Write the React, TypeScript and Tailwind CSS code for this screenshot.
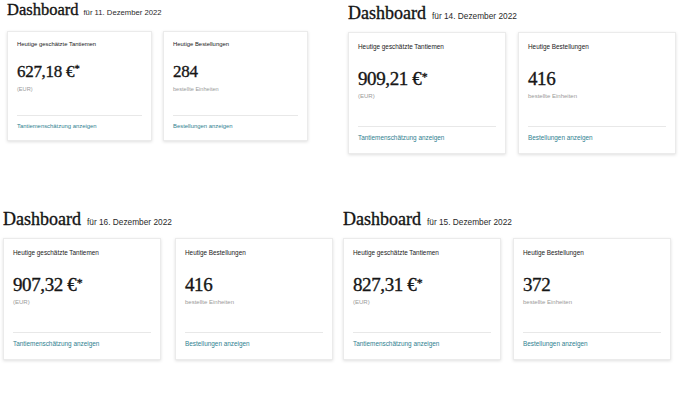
import React from "react";

type V = "sm" | "md";

const S = {
  sm: {
    title: "text-[16.5px] leading-[16.5px]",
    date: "text-[7.7px] ml-[5px]",
    titleRow: "mb-[12px]",
    card: "w-[145px] h-[110px] px-[9px] pt-[8px] pb-[10px]",
    heading: "text-[5.9px] leading-[8px]",
    value: "text-[17px] leading-[17px] mt-[15px] tracking-[-0.3px]",
    sub: "text-[5.6px] leading-[8px] mt-[5px]",
    link: "text-[5.9px] leading-[8px] pt-[6px]",
  },
  md: {
    title: "text-[18px] leading-[18px]",
    date: "text-[8.3px] ml-[6px]",
    titleRow: "mb-[10px]",
    card: "w-[158px] h-[122px] px-[9px] pt-[10px] pb-[11px]",
    heading: "text-[6.4px] leading-[8px]",
    value: "text-[19px] leading-[19px] mt-[18px] tracking-[-0.4px]",
    sub: "text-[6px] leading-[8px] mt-[4px]",
    link: "text-[6.4px] leading-[8px] pt-[7px]",
  },
};

function Card({ v, heading, value, sub, link }: { v: V; heading: string; value: React.ReactNode; sub: string; link: string }) {
  const s = S[v];
  return (
    <div className={`flex flex-col bg-white border border-[#ebebeb] shadow-[0_1px_3px_rgba(0,0,0,0.13)] ${s.card}`}>
      <div className={`text-[#1a1a1a] ${s.heading}`}>{heading}</div>
      <div className={`text-[#161616] [-webkit-text-stroke:0.35px_#161616] ${s.value}`} style={{ fontFamily: '"Liberation Serif", serif' }}>{value}</div>
      <div className={`text-[#9a9a9a] ${s.sub}`}>{sub}</div>
      <div className="flex-1" />
      <div className="border-t border-[#e8e8e8]" />
      <div className={`text-[#2f8190] ${s.link}`}>{link}</div>
    </div>
  );
}

function Panel({ v, date, money, count, cls, gap }: { v: V; date: string; money: string; count: string; cls: string; gap: string }) {
  const s = S[v];
  return (
    <div className={cls}>
      <div className={`flex items-baseline ${s.titleRow}`}>
        <span className={`text-[#141414] [-webkit-text-stroke:0.35px_#141414] ${s.title}`} style={{ fontFamily: '"Liberation Serif", serif' }}>Dashboard</span>
        <span className={`text-[#2a2a2a] ${s.date}`}>für {date}</span>
      </div>
      <div className={`flex ${gap}`}>
        <Card
          v={v}
          heading="Heutige geschätzte Tantiemen"
          value={<>{money} €<span className="text-[0.62em] leading-none relative -top-[0.4em] ml-[0.5px]">*</span></>}
          sub="(EUR)"
          link="Tantiemenschätzung anzeigen"
        />
        <Card v={v} heading="Heutige Bestellungen" value={count} sub="bestellte Einheiten" link="Bestellungen anzeigen" />
      </div>
    </div>
  );
}

export default function App() {
  return (
    <div className="w-[680px] h-[409px] bg-white overflow-hidden" style={{ fontFamily: '"Liberation Sans", Arial, sans-serif' }}>
      <div className="grid grid-cols-[340px_340px] h-[200px]">
        <Panel v="sm" date="11. Dezember 2022" money="627,18" count="284" cls="pl-[7px] pt-[2px]" gap="gap-[11px]" />
        <Panel v="md" date="14. Dezember 2022" money="909,21" count="416" cls="pl-[8px] pt-[4px]" gap="gap-[12px]" />
      </div>
      <div className="grid grid-cols-[340px_340px]">
        <Panel v="md" date="16. Dezember 2022" money="907,32" count="416" cls="pl-[3px] pt-[10px]" gap="gap-[14px]" />
        <Panel v="md" date="15. Dezember 2022" money="827,31" count="372" cls="pl-[3px] pt-[10px]" gap="gap-[12px]" />
      </div>
    </div>
  );
}
